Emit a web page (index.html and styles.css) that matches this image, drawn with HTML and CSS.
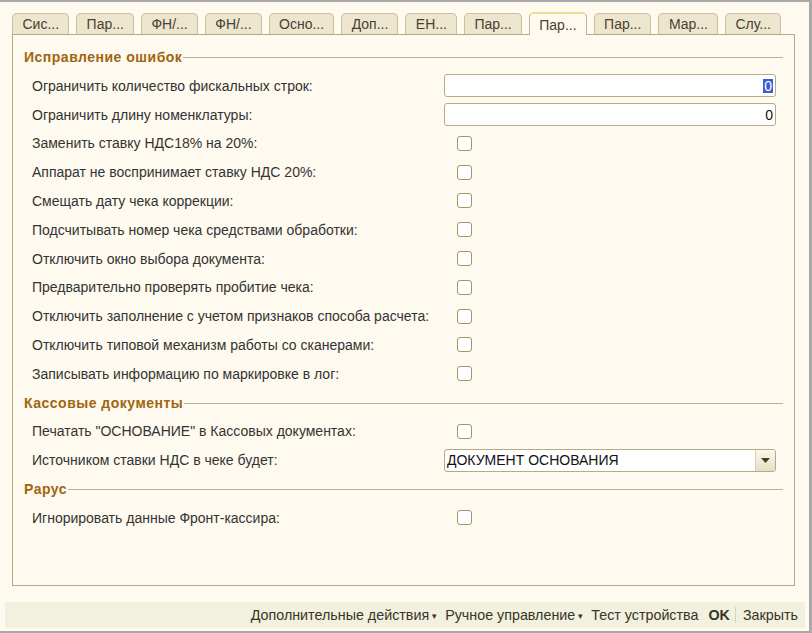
FILE: index.html
```html
<!DOCTYPE html>
<html lang="ru">
<head>
<meta charset="utf-8">
<link rel="stylesheet" href="styles.css">
</head>
<body>
<div class="window">
  <div class="tabs">
    <div class="tab">Сис...</div>
    <div class="tab">Пар...</div>
    <div class="tab">ФН/...</div>
    <div class="tab">ФН/...</div>
    <div class="tab">Осно...</div>
    <div class="tab">Доп...</div>
    <div class="tab">ЕН...</div>
    <div class="tab">Пар...</div>
    <div class="tab active">Пар...</div>
    <div class="tab">Пар...</div>
    <div class="tab">Мар...</div>
    <div class="tab">Слу...</div>
  </div>
  <div class="panel">
    <div class="heading">Исправление ошибок</div>
    <div class="row"><span class="label">Ограничить количество фискальных строк:</span><div class="input"><span class="sel">0</span></div></div>
    <div class="row"><span class="label">Ограничить длину номенклатуры:</span><div class="input">0</div></div>
    <div class="row"><span class="label">Заменить ставку НДС18% на 20%:</span><span class="check"></span></div>
    <div class="row"><span class="label">Аппарат не воспринимает ставку НДС 20%:</span><span class="check"></span></div>
    <div class="row"><span class="label">Смещать дату чека коррекции:</span><span class="check"></span></div>
    <div class="row"><span class="label">Подсчитывать номер чека средствами обработки:</span><span class="check"></span></div>
    <div class="row"><span class="label">Отключить окно выбора документа:</span><span class="check"></span></div>
    <div class="row"><span class="label">Предварительно проверять пробитие чека:</span><span class="check"></span></div>
    <div class="row"><span class="label">Отключить заполнение с учетом признаков способа расчета:</span><span class="check"></span></div>
    <div class="row"><span class="label">Отключить типовой механизм работы со сканерами:</span><span class="check"></span></div>
    <div class="row"><span class="label">Записывать информацию по маркировке в лог:</span><span class="check"></span></div>
    <div class="heading">Кассовые документы</div>
    <div class="row"><span class="label">Печатать "ОСНОВАНИЕ" в Кассовых документах:</span><span class="check"></span></div>
    <div class="row"><span class="label">Источником ставки НДС в чеке будет:</span><div class="select"><span class="value">ДОКУМЕНТ ОСНОВАНИЯ</span><span class="drop"><svg width="9" height="5" viewBox="0 0 9 5"><path d="M0 0H9L4.5 5Z" fill="#4a3c1c"/></svg></span></div></div>
    <div class="heading">Рарус</div>
    <div class="row"><span class="label">Игнорировать данные Фронт-кассира:</span><span class="check"></span></div>
  </div>
  <div class="footer">
    <span class="action">Дополнительные действия<span class="caret">▾</span></span>
    <span class="action">Ручное управление<span class="caret">▾</span></span>
    <span class="action">Тест устройства</span>
    <span class="action ok">OK</span>
    <span class="action close">Закрыть</span>
  </div>
</div>
</body>
</html>
```

FILE: styles.css
```css
html, body {
  margin: 0;
  padding: 0;
}
body {
  background: #a9a9a9;
  font-family: "Liberation Sans", Arial, sans-serif;
  font-size: 14px;
  color: #333;
}
.window {
  box-sizing: border-box;
  width: 809px;
  height: 629px;
  margin-top: 2px;
  background: #fefaef;
  display: flex;
  flex-direction: column;
}
.tabs {
  display: flex;
  gap: 7px;
  margin: 10px 0 0 12px;
  height: 22px;
  align-items: flex-end;
  position: relative;
  z-index: 1;
}
.tab {
  box-sizing: border-box;
  height: 21px;
  padding: 0 9px 0 9.5px;
  border: 1px solid #c9bf9c;
  border-bottom: none;
  border-radius: 5px 5px 0 0;
  background: #ede6cf;
  color: #4a4030;
  display: flex;
  align-items: center;
  justify-content: center;
}
.tab.active {
  height: 23px;
  margin-bottom: -1px;
  background: #fefaef;
  border-color: #bdb38e;
  border-top: 2px solid #f3d993;
  color: #4a4030;
}
.panel {
  box-sizing: border-box;
  margin-left: 12px;
  width: 783px;
  height: 552px;
  border: 1px solid #b3a983;
  padding: 7.6px 11px 0 11px;
}
.heading {
  height: 28.8px;
  display: flex;
  align-items: center;
  font-weight: bold;
  letter-spacing: 0.5px;
  color: #a0650f;
}
.heading::after {
  content: "";
  flex: 1;
  height: 1px;
  margin-left: 1px;
  margin-top: 2px;
  background: #bcb28f;
}
.row {
  height: 28.8px;
  display: flex;
  align-items: center;
  padding-left: 8px;
}
.label {
  width: 412px;
  flex: none;
  color: #333;
}
.input, .select {
  box-sizing: border-box;
  width: 332px;
  height: 23px;
  border: 1px solid #b5ab86;
  border-radius: 3px;
  background: #fff;
  display: flex;
  align-items: center;
  color: #111;
  font-size: 14px;
}
.input {
  justify-content: flex-end;
  padding-right: 2px;
}
.sel {
  background: #3b5fd0;
  color: #fff;
  padding: 0 1px;
  line-height: 14px;
}
.select {
  padding-left: 2px;
}
.value {
  flex: 1;
}
.drop {
  width: 19px;
  height: 21px;
  border-left: 1px solid #d8d0b0;
  background: linear-gradient(#fbf8ec, #e6dfc6);
  border-radius: 0 2px 2px 0;
  display: flex;
  align-items: center;
  justify-content: center;
}
.check {
  box-sizing: border-box;
  width: 15px;
  height: 15px;
  margin-left: 13px;
  border: 1px solid #a0976c;
  border-radius: 3px;
  background: #fff;
}
.footer {
  margin: 16px 0 0 5px;
  width: 800px;
  height: 26px;
  background: #f2f0de;
  display: flex;
  align-items: center;
  justify-content: flex-end;
  padding-right: 7px;
  box-sizing: border-box;
  color: #3a3426;
  font-size: 14.3px;
}
.action {
  margin-left: 8px;
}
.caret {
  font-size: 9px;
  margin-left: 3px;
  vertical-align: 1px;
}
.ok {
  font-weight: bold;
  padding-right: 5px;
  border-right: 1px solid #d8d4bc;
  margin-left: 10px;
}
.close {
  margin-left: 7px;
}
```
